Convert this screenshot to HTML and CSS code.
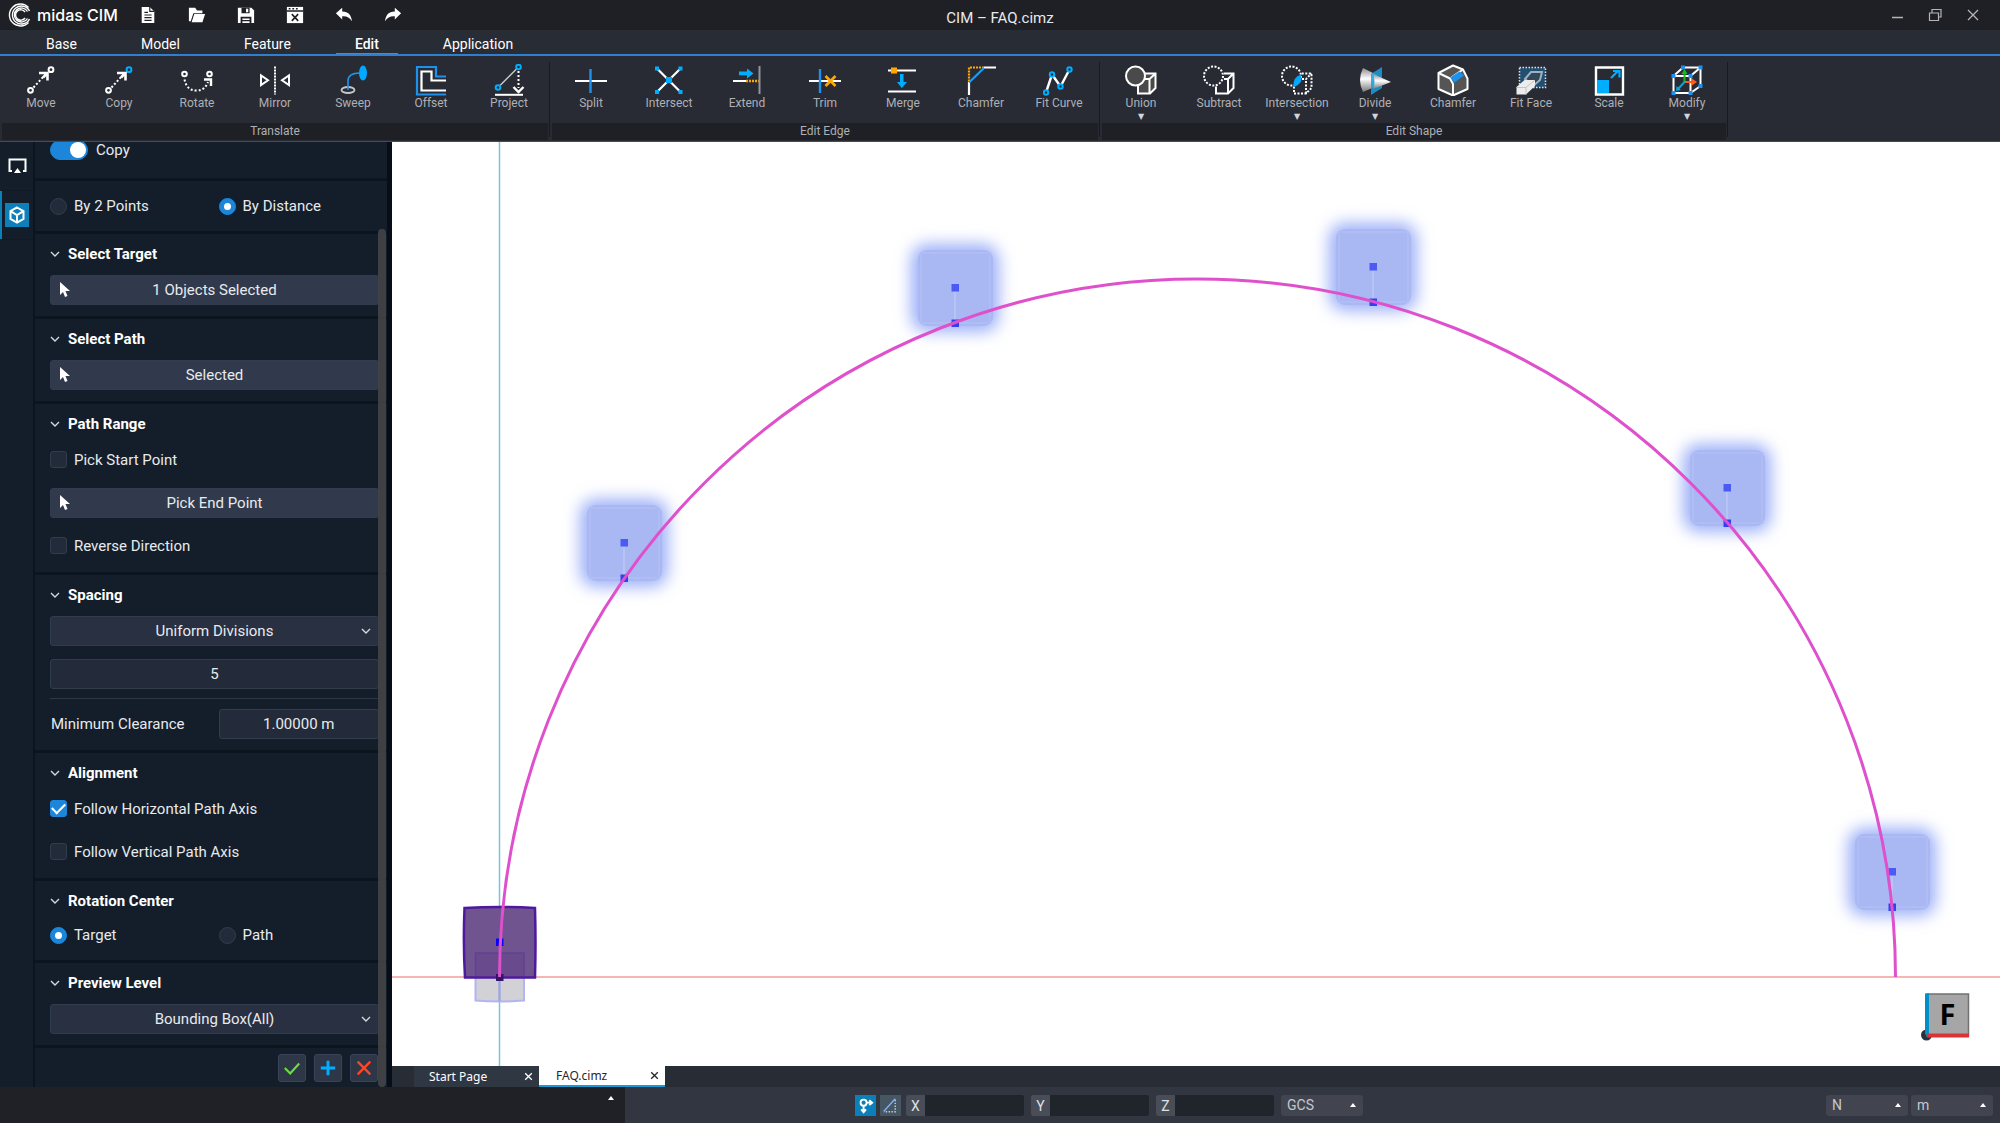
FILE: index.html
```html
<!DOCTYPE html>
<html lang="en">
<head>
<meta charset="utf-8">
<meta name="viewport" content="width=device-width, initial-scale=1">
<title>CIM – FAQ.cimz</title>
<link rel="stylesheet" href="styles.css">
</head>
<body>
<div class="app">
  <header class="titlebar">
    <div class="brand">
      <svg class="logo" viewBox="0 0 24 24" aria-hidden="true"><g fill="none" stroke="#fff" stroke-width="1.4"><path d="M20.5 4.5A11 11 0 1 0 20.5 19.5"/><path d="M21.5 8A9 9 0 1 0 21.5 16"/><path d="M19.5 8.500A7 7 0 1 0 19.500 15.500"/><path d="M17 9A5.200 5.200 0 1 0 17 15"/></g></svg>
      <span class="brand-name">midas CIM</span>
    </div>
    <div class="quick">
      <button type="button" aria-label="New"><svg viewBox="0 0 20 20"><path d="M3 1h9l5 5v13H3z" fill="#fff"/><path d="M12 1v5h5M6 7h4M6 10h8M6 13h8M6 16h8" fill="none" stroke="#1f2025" stroke-width="1.300"/></svg></button>
      <button type="button" aria-label="Open"><svg viewBox="0 0 20 20"><path d="M1 2h7l2 3h6v3H6L3 17H1z" fill="#fff"/><path d="M7 9h12l-3 9H4z" fill="#fff"/></svg></button>
      <button type="button" aria-label="Save"><svg viewBox="0 0 20 20"><path d="M1 2h15l3 3v14H1z" fill="#fff"/><path d="M5 2h9v6H5zM4 12h12v7H4z" fill="#1f2025"/><path d="M10 3h2.500v4H10zM6 14h8v1.500H6zM6 17h8v2H6z" fill="#fff"/></svg></button>
      <button type="button" aria-label="Close file"><svg viewBox="0 0 20 20"><path d="M1 1h18v18H1z" fill="#fff"/><path d="M1 5.500h18M3 3h2M7 3h2M11 3h2M6.500 9l7 7.500M13.500 9l-7 7.500" stroke="#1f2025" stroke-width="1.800"/></svg></button>
      <button type="button" aria-label="Undo"><svg viewBox="0 0 20 20"><path d="M1 8l7-6v4c7 0 10 4 11 11c-3-4-6-6-11-5.500V15z" fill="#fff"/></svg></button>
      <button type="button" aria-label="Redo"><svg viewBox="0 0 20 20"><path d="M19 8l-7-6v4C5 6 2 10 1 17c3-4 6-6 11-5.500V15z" fill="#fff"/></svg></button>
    </div>
    <h1 class="title">CIM – FAQ.cimz</h1>
    <div class="window-controls">
      <button type="button" aria-label="Minimize"><svg viewBox="0 0 14 14"><path d="M2 9.500h11" stroke="#b5b5b7" stroke-width="1.500"/></svg></button>
      <button type="button" aria-label="Restore"><svg viewBox="0 0 14 14"><path d="M1.500 5h9v7.500h-9zM4 5V1.500h9V9h-2.500" fill="none" stroke="#b5b5b7" stroke-width="1.200"/></svg></button>
      <button type="button" aria-label="Close"><svg viewBox="0 0 14 14"><path d="M2 2l10 10M12 2L2 12" stroke="#b5b5b7" stroke-width="1.300"/></svg></button>
    </div>
  </header>

  <nav class="menu">
    <a href="#base">Base</a>
    <a href="#model">Model</a>
    <a href="#feature">Feature</a>
    <a href="#edit" class="current">Edit</a>
    <a href="#application">Application</a>
  </nav>

  <div class="ribbon">
    <section class="group">
      <div class="tools">
        <button type="button" class="tool"><svg viewBox="0 0 32 32"><g fill="none" stroke="#fff" stroke-width="2"><circle cx="26" cy="5.700" r="2.400"/><circle cx="5.500" cy="26.300" r="2.400"/><path d="M8.500 23.500L18 13" stroke-dasharray="2 2"/><path d="M14 9h8.500v7.500M22 9.500l-4 4" stroke-width="2.600"/></g></svg>Move</button>
        <button type="button" class="tool"><svg viewBox="0 0 32 32"><g fill="none" stroke="#fff" stroke-width="2"><circle cx="26" cy="5.700" r="2.400" stroke="#00aeff"/><circle cx="5.500" cy="26.300" r="2.400"/><path d="M8.500 23.500L18 13" stroke-dasharray="2 2"/><path d="M14 9h8.500v7.500M22 9.500l-4 4" stroke-width="2.600"/></g></svg>Copy</button>
        <button type="button" class="tool"><svg viewBox="0 0 32 32"><g fill="none" stroke="#fff" stroke-width="2"><circle cx="3.500" cy="10" r="2.300"/><circle cx="28.500" cy="10" r="2.300"/><path d="M3.500 15.500C5 23 9 26.500 15.500 26.500S25 23 27 18" stroke-dasharray="2 2"/><path d="M23 15.500h7V22" stroke-width="2.400"/></g></svg>Rotate</button>
        <button type="button" class="tool"><svg viewBox="0 0 32 32"><g fill="none" stroke="#fff" stroke-width="2"><path d="M16 2.500v28" stroke-dasharray="2 1"/><path d="M2 11.500v9.500l7-4.750zM30 11.500v9.500l-7-4.750z"/></g></svg>Mirror</button>
        <button type="button" class="tool"><svg viewBox="0 0 32 32"><g fill="none"><ellipse cx="11" cy="26" rx="6.500" ry="3" stroke="#c4c6ca" stroke-width="1.800"/><path d="M11 26V17q0-8 12-8" stroke="#1e96ee" stroke-width="1.600"/><ellipse cx="26" cy="9" rx="4" ry="7.500" fill="#00a8ff"/></g></svg>Sweep</button>
        <button type="button" class="tool"><svg viewBox="0 0 32 32"><g fill="none" stroke-width="2.200"><path d="M31 12.500H21V3H2v27.500h29" stroke="#1c91ee"/><path d="M31 16.500H16.500V7.500H6.500v19H31" stroke="#fff"/></g></svg>Offset</button>
        <button type="button" class="tool"><svg viewBox="0 0 32 32"><g fill="none" stroke="#fff" stroke-width="2"><path d="M7 21.500L24 4.500" stroke="#c8cacd" stroke-width="1.500"/><path d="M25.500 7v17" stroke-dasharray="2 2"/><path d="M20.500 23l5 5 5-5" stroke-width="2.400"/><path d="M2 30.800h28"/><g stroke="#00aeff"><circle cx="25.500" cy="3" r="2.300"/><circle cx="5" cy="23.500" r="2.300"/></g></g></svg>Project</button>
      </div>
      <h2 class="caption">Translate</h2>
    </section>
    <section class="group">
      <div class="tools">
        <button type="button" class="tool"><svg viewBox="0 0 32 32"><path d="M0 17h32" stroke="#fff" stroke-width="2"/><path d="M15.500 5v24" stroke="#1c91ee" stroke-width="2.400"/></svg>Split</button>
        <button type="button" class="tool"><svg viewBox="0 0 32 32"><path d="M4 4.500l23.500 23.500M27.500 4.500L4 28" stroke="#fff" stroke-width="2.200"/><path d="M2 2.500h4v4H2zM25.500 2.500h4v4h-4zM2 26h4v4H2zM25.500 26h4v4h-4zM13 13h6v6h-6z" fill="#00aeff"/></svg>Intersect</button>
        <button type="button" class="tool"><svg viewBox="0 0 32 32"><path d="M2 17h13" stroke="#fff" stroke-width="2"/><path d="M15 17h13" stroke="#ffa800" stroke-width="2.400" stroke-dasharray="2 1"/><path d="M28.500 2v28" stroke="#8f979d" stroke-width="2"/><path d="M8 7.500h8V4.500l6.500 5-6.500 5v-3.200H8z" fill="#00aeff"/></svg>Extend</button>
        <button type="button" class="tool"><svg viewBox="0 0 32 32"><path d="M0 17h32" stroke="#fff" stroke-width="2"/><path d="M11 5v24" stroke="#1c91ee" stroke-width="2.400"/><path d="M16.500 12l10 10M26.500 12l-10 10" stroke="#ffa800" stroke-width="2.600"/></svg>Trim</button>
        <button type="button" class="tool"><svg viewBox="0 0 32 32"><path d="M1 6.500h28M1 27.500h28" stroke="#fff" stroke-width="2.200"/><path d="M4 3.500h6v6H4z" fill="#ffa800"/><path d="M13 10h3.500v8H20l-5.250 6L10 18h3z" fill="#00aeff"/></svg>Merge</button>
        <button type="button" class="tool"><svg viewBox="0 0 32 32"><g fill="none" stroke-width="2.200"><path d="M19 3.500H4V18" stroke="#ffa800" stroke-dasharray="2 1"/><path d="M19 3.500h12M4 18v13" stroke="#fff"/><path d="M19 4L4 18.500" stroke="#1c9cf4"/></g></svg>Chamfer</button>
        <button type="button" class="tool"><svg viewBox="0 0 32 32"><path d="M3 28.500l6-18 8.500 12 9-17" fill="none" stroke="#fff" stroke-width="2.400"/><g fill="#282b34" stroke="#00aeff" stroke-width="2"><circle cx="3" cy="28.500" r="2.200"/><circle cx="9" cy="10.500" r="2.200"/><circle cx="17.500" cy="22.500" r="2.200"/><circle cx="26.500" cy="5.500" r="2.200"/></g></svg>Fit Curve</button>
      </div>
      <h2 class="caption">Edit Edge</h2>
    </section>
    <section class="group">
      <div class="tools">
        <button type="button" class="tool"><svg viewBox="0 0 32 32"><g fill="#4a4a4a" stroke="#fff" stroke-width="2"><path d="M13 15l5-5.500h12.500V24L25 29.500H13zM13 15h11.500v14.500M24.500 15l6-5.500" /><circle cx="10.500" cy="12" r="9.500"/></g></svg>Union<span class="more">▼</span></button>
        <button type="button" class="tool"><svg viewBox="0 0 32 32"><g fill="none" stroke="#fff" stroke-width="2"><circle cx="10.500" cy="12" r="9.500" stroke-dasharray="2 1.500"/><path d="M13 22.500v7h12l5.500-5.500V9.500H21M25 29.500V15M21 15h4l5.500-5.500"/></g></svg>Subtract</button>
        <button type="button" class="tool"><svg viewBox="0 0 32 32"><g fill="none" stroke="#fff" stroke-width="2" stroke-dasharray="2 1.500"><circle cx="10.500" cy="12" r="9.500"/><path d="M13 22.500v7h12l5.500-5.500V9.500H21M25 29.500V15M21 15h4l5.500-5.500"/></g><path d="M20 10.500q2.500 9.500-7.500 12.500q-1-10 7.500-12.500z" fill="#00a8ff"/></svg>Intersection<span class="more">▼</span></button>
        <button type="button" class="tool"><svg viewBox="0 0 32 32"><defs><linearGradient id="cone" x1="0" y1="0" x2="0" y2="1"><stop offset="0" stop-color="#8c8c8c"/><stop offset=".45" stop-color="#fff"/><stop offset="1" stop-color="#777"/></linearGradient></defs><path d="M4 4l14 7v11L4 28q-6-12 0-24z" fill="url(#cone)"/><path d="M12 10l11-7v21l-11 7z" fill="#1c9cdd" opacity=".85"/><path d="M14 10l18 8-18 7q3-7 0-15z" fill="url(#cone)"/></svg>Divide<span class="more">▼</span></button>
        <button type="button" class="tool"><svg viewBox="0 0 32 32"><g stroke="#fff" stroke-width="2" stroke-linejoin="round"><path d="M16 1.500l10 4 4.500 9V25L16 31.500 1.500 25V9z" fill="#555"/><path d="M1.500 9l11.500 5.500L16 20v11.500M13 14.500l13-9" fill="none"/></g><path d="M13 13.500l9.500-6 4.500 4-9.500 7z" fill="#1c91ee"/></svg>Chamfer</button>
        <button type="button" class="tool"><svg viewBox="0 0 32 32"><path d="M4.500 3.500h26v20h-26z" fill="#224e70" stroke="#dce4ea" stroke-width="1.500" stroke-dasharray="1.500 1.500"/><path d="M10 15l6-7h11l-2 8-7 6z" fill="#33475a" stroke="#9fb1bf" stroke-width="2"/><path d="M1.500 23l8-7H20v6l-9 8.500H1.500z" fill="#ececec"/><path d="M1.500 23.500H11v7M11 23.500l9-7.500" fill="none" stroke="#c4c4c4"/></svg>Fit Face</button>
        <button type="button" class="tool"><svg viewBox="0 0 32 32"><path d="M3 3.500h27v27H3z" fill="none" stroke="#fff" stroke-width="2.400"/><path d="M4 16h12v13H4z" fill="#00aeff"/><path d="M18 14l7.500-7.500M20 7h6.500v6.500" fill="none" stroke="#00aeff" stroke-width="2.200"/></svg>Scale</button>
        <button type="button" class="tool"><svg viewBox="0 0 32 32"><g fill="none" stroke="#fff" stroke-width="2"><path d="M2.500 12h17v17h-17zM2.500 12l9.500-8.500h17.500V22L19.500 29M19.500 12l10-8.500"/></g><path d="M13.500 18v-9" stroke="#18b818" stroke-width="2"/><path d="M13.500 18H22" stroke="#ff5a1c" stroke-width="2"/><path d="M13.500 18L7 25" stroke="#00a8dd" stroke-width="2"/><path d="M10.500 10l3-5 3 5z" fill="#18b818"/><path d="M21 14.500l5 3.500-5 3.500z" fill="#ff5a1c"/><path d="M5 27l.5-5 4.500 4z" fill="#00a8dd"/><path d="M.5 10h4v4h-4zM17.500 10h4v4h-4zM.5 27h4v4h-4zM17.500 27h4v4h-4zM10 1.500h4v4h-4zM27.500 1.500h4v4h-4zM27.500 20h4v4h-4z" fill="#1c91ee"/></svg>Modify<span class="more">▼</span></button>
      </div>
      <h2 class="caption">Edit Shape</h2>
    </section>
  </div>

  <main class="workspace">
    <aside class="rail">
      <button type="button" class="rail-item" aria-label="Display"><svg viewBox="0 0 24 24"><path d="M7 17H4.500V5.500h16V17H18" fill="none" stroke="#fff" stroke-width="2"/><path d="M12.500 14l3.500 5H9z" fill="#fff"/></svg></button>
      <button type="button" class="rail-item active" aria-label="Object"><svg viewBox="0 0 24 24"><path d="M12 4.500l6.500 3.700v7.600L12 19.500l-6.500-3.700V8.200zM5.500 8.200L12 12l6.500-3.800M12 12v7.500" fill="none" stroke="#fff" stroke-width="2"/></svg></button>
    </aside>

    <form class="panel">
      <div class="block switch-block">
        <label class="option"><input type="checkbox" class="switch" checked>Copy</label>
      </div>
      <div class="block method-block">
        <label class="option"><input type="radio" name="method">By 2 Points</label>
        <label class="option"><input type="radio" name="method" checked>By Distance</label>
      </div>

      <section class="block">
        <h3><svg class="chevron" viewBox="0 0 10 10"><path d="M1 3l4 4 4-4"/></svg>Select Target</h3>
        <div class="row"><button type="button" class="field pick"><svg viewBox="0 0 12 16"><path d="M1 0v13l3-3 2 5 2.500-1L6.500 9H11z"/></svg>1 Objects Selected</button></div>
      </section>
      <section class="block">
        <h3><svg class="chevron" viewBox="0 0 10 10"><path d="M1 3l4 4 4-4"/></svg>Select Path</h3>
        <div class="row"><button type="button" class="field pick"><svg viewBox="0 0 12 16"><path d="M1 0v13l3-3 2 5 2.500-1L6.500 9H11z"/></svg>Selected</button></div>
      </section>
      <section class="block">
        <h3><svg class="chevron" viewBox="0 0 10 10"><path d="M1 3l4 4 4-4"/></svg>Path Range</h3>
        <div class="row"><label class="option"><input type="checkbox">Pick Start Point</label></div>
        <div class="row"><button type="button" class="field pick"><svg viewBox="0 0 12 16"><path d="M1 0v13l3-3 2 5 2.500-1L6.500 9H11z"/></svg>Pick End Point</button></div>
        <div class="row"><label class="option"><input type="checkbox">Reverse Direction</label></div>
      </section>
      <section class="block">
        <h3><svg class="chevron" viewBox="0 0 10 10"><path d="M1 3l4 4 4-4"/></svg>Spacing</h3>
        <div class="row drop"><select class="field" aria-label="Spacing mode"><option>Uniform Divisions</option></select><svg class="chevron" viewBox="0 0 10 10"><path d="M1 3l4 4 4-4"/></svg></div>
        <div class="row"><input class="field" type="text" value="5" aria-label="Divisions"></div>
        <hr>
        <div class="row pair"><label for="clearance">Minimum Clearance</label><input class="field" id="clearance" type="text" value="1.00000 m"></div>
      </section>
      <section class="block">
        <h3><svg class="chevron" viewBox="0 0 10 10"><path d="M1 3l4 4 4-4"/></svg>Alignment</h3>
        <div class="row"><label class="option"><input type="checkbox" checked>Follow Horizontal Path Axis</label></div>
        <div class="row"><label class="option"><input type="checkbox">Follow Vertical Path Axis</label></div>
      </section>
      <section class="block">
        <h3><svg class="chevron" viewBox="0 0 10 10"><path d="M1 3l4 4 4-4"/></svg>Rotation Center</h3>
        <div class="row pair short"><label class="option"><input type="radio" name="center" checked>Target</label><label class="option"><input type="radio" name="center">Path</label></div>
      </section>
      <section class="block">
        <h3><svg class="chevron" viewBox="0 0 10 10"><path d="M1 3l4 4 4-4"/></svg>Preview Level</h3>
        <div class="row drop"><select class="field" aria-label="Preview level"><option>Bounding Box(All)</option></select><svg class="chevron" viewBox="0 0 10 10"><path d="M1 3l4 4 4-4"/></svg></div>
      </section>
      <div class="actions">
        <button type="button" aria-label="OK"><svg viewBox="0 0 20 20"><path d="M2 10l6 6L18 5" stroke="#6ade3c" stroke-width="2.400"/></svg></button>
        <button type="button" aria-label="Apply"><svg viewBox="0 0 20 20"><path d="M10 2v16M2 10h16" stroke="#00aeff" stroke-width="3.200"/></svg></button>
        <button type="button" aria-label="Cancel"><svg viewBox="0 0 20 20"><path d="M3 3l14 14M17 3L3 17" stroke="#ff4526" stroke-width="2.600"/></svg></button>
      </div>
      <div class="scrollbar"></div>
    </form>

    <div class="document">
      <div class="canvas">
        <svg viewBox="0 -1 1608 924" preserveAspectRatio="xMidYMid meet" role="img" aria-label="Model view">
          <defs>
            <filter id="glow" x="-60%" y="-60%" width="220%" height="220%"><feGaussianBlur stdDeviation="8"/></filter>
            <g id="ghost">
              <rect x="-44" y="-44" width="88" height="88" rx="16" fill="#9db0f8" filter="url(#glow)"/>
              <rect x="-37" y="-38" width="75" height="76" rx="9" fill="#a9b8f3"/>
              <rect x="-34" y="-35" width="69" height="70" fill="#a9b8f3" stroke="#b0bdf4" stroke-width="2"/>
              <path d="M0 4v30" stroke="#bcc7f3" stroke-width="1.500"/>
              <path d="M-3.500-4h7.500v7.500h-7.500z" fill="#4a5af2"/>
              <path d="M-3.500 31.500h7.500v7.500h-7.500z" fill="#3340f2"/>
            </g>
          </defs>
          <path d="M107.500-1v924" stroke="#7cc4de" stroke-width="1.500"/>
          <path d="M0 834h1608" stroke="#f29c9c" stroke-width="1.500"/>
          <use href="#ghost" x="232" y="400"/>
          <use href="#ghost" x="563" y="145"/>
          <use href="#ghost" x="981" y="124"/>
          <use href="#ghost" x="1335" y="345"/>
          <use href="#ghost" x="1500" y="729"/>
          <path d="M83.500 810h48.500v47.500q-24 2-48.500 0z" fill="#d1d1d6" stroke="#b1b5f2" stroke-width="2"/>
          <path d="M107.500 834v24" stroke="#a0a6dc" stroke-width="2.500"/>
          <path d="M72.500 765q35-2 70.500 0q1 35 0 69.500H73q-2-35-.5-69.500z" fill="#70548f" stroke="#4e199c" stroke-width="2.500"/>
          <path d="M83.500 833v-23h48.500v23" fill="#694a8c" stroke="#5f4094" stroke-width="1.500"/>
          <path d="M104 795.500h7.500v7.500H104z" fill="#0a00ff"/>
          <path d="M104 831h7.500v7H104z" fill="#2e1766"/>
          <path d="M107.500 834A698 698 0 0 1 1503.500 834" fill="none" stroke="#df50cc" stroke-width="3"/>
          <circle cx="1534.500" cy="892" r="5.500" fill="#273241"/>
          <path d="M1535 851h41.500v42H1535z" fill="#a6a6a6" stroke="#727272" stroke-width="1.500"/>
          <path d="M1533 850.500h4v41h-4z" fill="#008fc8"/>
          <path d="M1535 890.500h42v4h-42z" fill="#db3237"/>
          <text class="cube-face" x="1555.500" y="882" text-anchor="middle">F</text>
        </svg>
      </div>
      <div class="tabs">
        <div class="tab"><a href="#start">Start Page</a><button type="button" aria-label="Close Start Page"><svg viewBox="0 0 10 10"><path d="M2 2l6 6M8 2L2 8"/></svg></button></div>
        <div class="tab current"><a href="#faq">FAQ.cimz</a><button type="button" aria-label="Close FAQ.cimz"><svg viewBox="0 0 10 10"><path d="M2 2l6 6M8 2L2 8"/></svg></button></div>
      </div>
    </div>
  </main>

  <footer class="status">
    <div class="messages"><svg class="up" viewBox="0 0 6 4"><path d="M0 4l3-4 3 4z"/></svg></div>
    <div class="coords">
      <button type="button" class="snap on" aria-label="Point snap"><svg viewBox="0 0 20 20"><g fill="none" stroke="#fff" stroke-width="2"><circle cx="8" cy="7" r="3.200"/><path d="M8 10v7M11 7h6M5.500 14L8 17l2.500-3M14 4.500L17 7l-3 2.500"/></g></svg></button>
      <button type="button" class="snap" aria-label="Angle snap"><svg viewBox="0 0 20 20"><path d="M3 16L15 3" stroke="#7fb0f0" stroke-width="1.500"/><path d="M15 4v12.500H3" fill="none" stroke="#c4cdd2" stroke-width="1.500" stroke-dasharray="1.500 1.500"/></svg></button>
    </div>
    <div class="axes">
      <label class="axis"><span>X</span><input type="text"></label>
      <label class="axis"><span>Y</span><input type="text"></label>
      <label class="axis"><span>Z</span><input type="text"></label>
      <div class="unit"><select aria-label="Coordinate system"><option>GCS</option></select><svg class="up" viewBox="0 0 6 4"><path d="M0 4l3-4 3 4z"/></svg></div>
    </div>
    <div class="units">
      <div class="unit"><select aria-label="Force unit"><option>N</option></select><svg class="up" viewBox="0 0 6 4"><path d="M0 4l3-4 3 4z"/></svg></div>
      <div class="unit"><select aria-label="Length unit"><option>m</option></select><svg class="up" viewBox="0 0 6 4"><path d="M0 4l3-4 3 4z"/></svg></div>
    </div>
  </footer>
</div>
</body>
</html>
```
FILE: styles.css
```css
* { box-sizing: border-box; }

body {
  margin: 0;
  font: 15px/20px Roboto, "Liberation Sans", sans-serif;
  color: #e8eaed;
  background: #1f2025;
}

button, input, select { margin: 0; padding: 0; border: 0; font: inherit; color: inherit; background: none; }
a { color: inherit; text-decoration: none; }
h1, h2, h3 { margin: 0; font: inherit; }
svg { display: block; flex: none; }

.app { display: flex; flex-direction: column; height: 100vh; }

/* Title bar */
.titlebar {
  display: grid;
  grid-template-columns: 1fr auto 1fr;
  align-items: center;
  height: 30px;
  flex: none;
}
.brand, .quick { grid-row: 1; grid-column: 1; }
.brand { display: flex; align-items: center; gap: 5px; padding-left: 8px; }
.logo { width: 24px; height: 24px; }
.brand-name { font: 500 16px/20px Inter, sans-serif; color: #fff; }
.quick { display: flex; gap: 31px; padding-left: 139px; }
.quick svg { width: 18px; height: 18px; }
.title { grid-column: 2; padding-top: 6px; }
.window-controls { grid-column: 3; justify-self: end; display: flex; gap: 24px; padding-right: 20px; }
.window-controls svg { width: 14px; height: 14px; }

/* Menu */
.menu {
  display: flex;
  flex: none;
  gap: 26px;
  height: 26px;
  padding-left: 27px;
  background: #282c34;
  border-bottom: 2px solid #2f7fd0;
  font-size: 14px;
  line-height: 28px;
  color: #fff;
}
.menu a { padding: 0 19px; }
.menu .current { font-weight: 500; box-shadow: inset 0 -1px #2f8fee; }

/* Ribbon */
.ribbon { display: flex; flex: none; height: 86px; background: #282b34; border-bottom: 1px solid #4b4955; }
.group { display: flex; flex-direction: column; justify-content: space-between; padding: 6px 2px 1px; position: relative; }
.group::after { content: ""; position: absolute; right: 0; top: 6px; bottom: 4px; width: 1px; background: #181a1f; }
.tools { display: flex; }
.tool {
  display: flex;
  flex-direction: column;
  align-items: center;
  width: 78px;
  font-size: 12px;
  line-height: 15px;
  color: #aeb0b6;
}
.tool svg { width: 32px; height: 32px; margin-top: 2px; }
.more { font-size: 8px; line-height: 11px; color: #d4d5d8; font-family: "DejaVu Sans", sans-serif; }
.caption { background: #1f2025; font-size: 12px; line-height: 17px; text-align: center; color: #aeb0b6; }

/* Workspace */
.workspace { display: flex; flex: 1; min-height: 0; background: #131e2a; }
.rail { display: flex; flex-direction: column; width: 35px; border-right: 2px solid #0b1520; }
.rail-item { display: flex; align-items: center; justify-content: center; height: 49px; border-bottom: 1px solid #111a22; }
.rail-item svg { width: 24px; height: 24px; }
.rail-item.active { box-shadow: inset 2px 0 #0d80b8; }
.rail-item.active svg { background: #0d7fb9; }

/* Command panel */
.panel {
  display: flex;
  flex-direction: column;
  position: relative;
  width: 357px;
  flex: none;
  overflow: hidden;
  border-right: 5px solid #070e17;
}
.block { border-bottom: 3px solid #0b151f; padding: 6px 8px 5px 15px; flex: none; }
.switch-block { margin-top: -2px; padding-top: 0; padding-bottom: 18px; }
.method-block, .pair { display: grid; grid-template-columns: 1fr 1fr; gap: 8px; align-items: center; }
.method-block { padding-top: 15px; padding-bottom: 15px; }
.block h3 { display: flex; align-items: center; gap: 8px; height: 28px; font-weight: 700; color: #fff; }
.chevron { width: 10px; height: 10px; fill: none; stroke: #d5d8dc; stroke-width: 1.400; }
.row { display: flex; align-items: center; height: 43px; }
.row.pair { display: grid; }
.row.pair > label:not(.option) { padding-left: 1px; }
.row.short { height: 40px; }
.block hr { margin: 3px 0; border: 0; height: 1px; background: #2b3744; }

.option { display: flex; align-items: center; gap: 7px; }
.option input {
  appearance: none;
  display: grid;
  place-items: center;
  width: 17px;
  height: 17px;
  border: 1px solid #323c4d;
  border-radius: 3px;
  background: #232b3b;
}
.option input[type=radio] { border-radius: 50%; }
.option input:checked { background: #1c86da; border-color: #1c86da; }
.option input:checked::before { content: ""; }
.option input[type=radio]:checked::before { width: 7px; height: 7px; border-radius: 50%; background: #fff; }
.option input[type=checkbox]:checked::before {
  width: 11px;
  height: 6px;
  margin-bottom: 3px;
  border: solid #fff;
  border-width: 0 0 2px 2px;
  transform: rotate(-45deg);
}
.option .switch { width: 38px; height: 20px; border-radius: 10px; margin-right: 1px; place-items: center end; }
.option .switch[type=checkbox]:checked::before { width: 16px; height: 16px; margin: 0 1px 0 0; border: 0; border-radius: 50%; background: #fff; transform: none; }

.field {
  appearance: none;
  flex: 1;
  min-width: 0;
  height: 30px;
  border: 1px solid #313c4d;
  border-radius: 3px;
  background: #232b3a;
  text-align: center;
  text-align-last: center;
}
select.field { background: #283041; }
.field.pick { display: grid; grid-template-columns: 12px 1fr 12px; align-items: center; padding: 0 8px; background: #303a4c; }
.pick svg { width: 12px; height: 16px; fill: #fff; }
.drop { display: grid; grid-template-columns: 1fr; }
.drop > * { grid-area: 1 / 1; }
.drop .chevron { justify-self: end; margin-right: 8px; pointer-events: none; }

.actions { display: flex; flex: none; justify-content: flex-end; gap: 8px; padding: 6px 9px 5px; }
.actions button { display: grid; place-items: center; width: 28px; height: 28px; border: 1px solid #38445a; border-radius: 3px; background: #2d3748; }
.actions svg { width: 18px; height: 18px; fill: none; }
.scrollbar { position: absolute; right: 1px; top: 87px; bottom: 0; width: 8px; border-radius: 4px; background: #404246; opacity: .95; }

/* Document area */
.document { display: flex; flex-direction: column; flex: 1; min-width: 0; }
.canvas { flex: 1; min-height: 0; background: #fff; }
.canvas svg { width: 100%; height: 100%; }
.cube-face { font: 700 29px "Noto Sans", sans-serif; }
.tabs { display: flex; flex: none; height: 21px; padding-left: 22px; background: #282c35; font: 12px/20px "Noto Sans", sans-serif; }
.tab { display: flex; align-items: center; justify-content: space-between; width: 125px; padding: 0 5px 0 15px; background: #2f3742; color: #fff; }
.tab svg { width: 11px; height: 11px; fill: none; stroke: currentColor; stroke-width: 1.200; }
.tab.current { width: 126px; padding-left: 17px; background: #fff; color: #26282e; border-bottom: 2px solid #199ad6; }

/* Status bar */
.status { display: flex; flex: none; align-items: center; height: 36px; background: #313640; padding-right: 7px; font-size: 14px; }
.messages { display: flex; justify-content: flex-end; align-self: stretch; width: 625px; padding: 9px 11px; background: #202126; }
.up { width: 6px; height: 4px; fill: #fff; }
.coords { display: flex; gap: 4px; margin: 0 5px 0 230px; }
.snap { display: grid; place-items: center; width: 21px; height: 21px; background: #465663; }
.snap svg { width: 19px; height: 19px; }
.snap.on { background: #0b7fba; }
.axes { display: flex; gap: 7px; }
.axis { display: flex; height: 21px; border-radius: 2px; overflow: hidden; background: #20242b; }
.axis span { width: 19px; background: #484d58; text-align: center; line-height: 22px; color: #dfe1e4; }
.axis input { width: 99px; }
.unit { display: grid; grid-template-columns: 1fr; align-items: center; width: 82px; height: 21px; border-radius: 3px; background: #42454f; color: #c3c8d0; }
.unit > * { grid-area: 1 / 1; }
.unit select { appearance: none; padding-left: 6px; }
.unit .up { justify-self: end; margin-right: 7px; pointer-events: none; }
.units { display: flex; gap: 3px; margin-left: auto; }
```
